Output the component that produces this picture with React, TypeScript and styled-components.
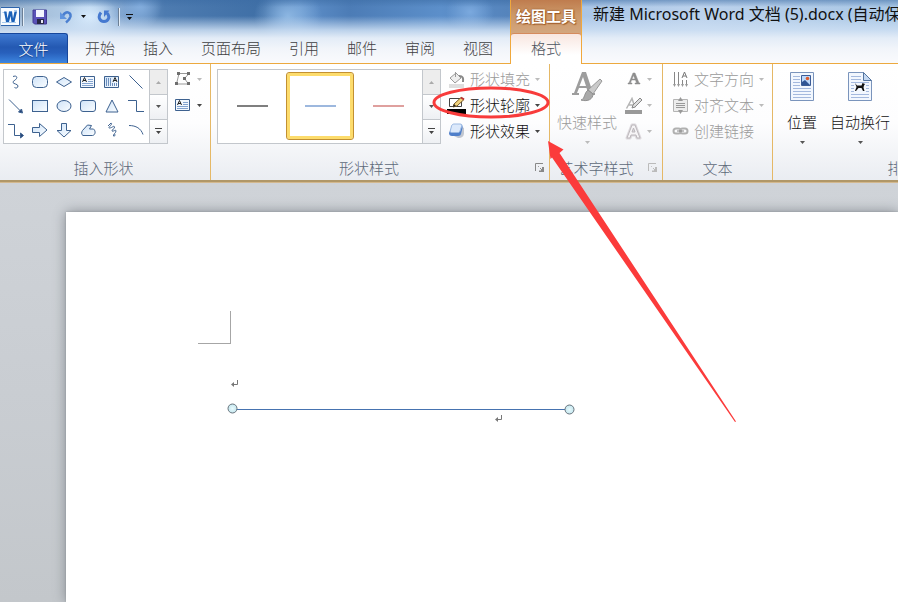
import React from "react";
import styled, { createGlobalStyle } from "styled-components";

const Global = createGlobalStyle`
  *, *::before, *::after { box-sizing: border-box; }
  html, body, #root { height: 100%; }
  body {
    margin: 0;
    overflow: hidden;
    font-family: "Noto Sans", "Noto Sans CJK SC", sans-serif;
    font-size: 15px;
    font-weight: 300;
    line-height: 20px;
    color: #333;
  }
  button {
    margin: 0;
    padding: 0;
    border: 0;
    background: none;
    font: inherit;
    color: inherit;
    white-space: nowrap;
  }
  svg { display: block; flex: none; }
`;

const ORANGE = "#eca93f";

const Window = styled.div`
  position: relative;
  display: flex;
  flex-direction: column;
  height: 100%;
  overflow: hidden;
`;

const Header = styled.header`
  display: flex;
  flex: none;
  height: 64px;
  background:
    linear-gradient(to bottom, rgba(205, 223, 243, 0) 16px, rgba(205, 223, 243, 0.85) 30px, #e3ecf7 38px, #f2f5fa 49px, #fafbfd 64px),
    linear-gradient(to bottom, rgba(60, 108, 164, 0.55), rgba(60, 108, 164, 0) 7px),
    radial-gradient(ellipse 30px 22px at 90px 18px, #d8ebfc 0%, rgba(201, 226, 248, 0) 100%),
    radial-gradient(ellipse 22px 26px at 140px 4px, #86b0e0 0%, rgba(134, 180, 230, 0) 100%),
    radial-gradient(ellipse 34px 30px at 288px 16px, #8cb6e2 0%, rgba(143, 189, 232, 0) 100%),
    radial-gradient(ellipse 24px 20px at 470px 12px, #7ba9de 0%, rgba(138, 184, 236, 0) 100%),
    linear-gradient(to right, #8fa9c6 0, #a9c3de 50px, #b4d0ec 90px, #7ba0cb 125px, #4d7bb0 165px, #3f6fa6 265px, #5f90ca 300px, #4c7cb6 350px, #5c8fca 440px, #5584bc 508px, #a9c5e6 582px, #bcd2ec 700px, #a9c7e5 100%);
`;

const HeaderMain = styled.div`
  display: flex;
  flex: none;
  flex-direction: column;
  justify-content: space-between;
  width: 510px;
  border-bottom: 1px solid ${ORANGE};
`;

const QuickAccess = styled.div`
  display: flex;
  align-items: center;
  height: 33px;
`;

const QuickButton = styled.button<{ $w: number }>`
  display: flex;
  align-items: center;
  justify-content: center;
  width: ${(p) => p.$w}px;
  height: 22px;
`;

const QuickDivider = styled.span`
  width: 2px;
  height: 18px;
  border-left: 1px solid #6c7f95;
  border-right: 1px solid #e4eef8;
`;

const Tabs = styled.nav`
  display: flex;
  align-items: flex-end;
`;

const FileTab = styled.button`
  width: 68px;
  height: 30px;
  margin-right: 3px;
  border: 1px solid #17479c;
  border-left: 0;
  border-bottom: 0;
  border-radius: 0 3px 0 0;
  background: linear-gradient(#3f7ad2, #2459b2 45%, #2860bc 65%, #3d86e0);
  color: #fff;
  text-shadow: 0 1px 1px #123c80;
`;

const Tab = styled.button`
  height: 30px;
  padding: 0 14px;
  color: #3f4042;
`;

const ContextTabs = styled.div`
  display: flex;
  flex: none;
  flex-direction: column;
  width: 72px;
  border: 1px solid #f0a83c;
  border-top: 0;
  border-bottom: 0;
  background: linear-gradient(#bf7c4e, #cb9767 14px, #d3a67e 33px);
`;

const ContextTitle = styled.div`
  height: 33px;
  padding-top: 6px;
  color: #fff;
  font-weight: 600;
  text-align: center;
  text-shadow: 0 0 2px #8b4513, 1px 1px 1px #a8632e;
  white-space: nowrap;
`;

const ContextTab = styled.button`
  flex: 1;
  padding-bottom: 2px;
  border-top: 1px solid #d58a5c;
  border-radius: 3px 3px 0 0;
  background: linear-gradient(#f8e6e0, #fff 70%);
  color: #4d5560;
`;

const DocTitle = styled.div`
  flex: 1;
  min-width: 0;
  padding: 4px 0 0 11px;
  overflow: hidden;
  border-bottom: 1px solid ${ORANGE};
  color: #111;
  font-size: 16px;
  white-space: nowrap;
  font-weight: 400;
`;

const Ribbon = styled.div`
  display: flex;
  flex: none;
  height: 119px;
  overflow: hidden;
  border-bottom: 1px solid #d3b88e;
  box-shadow: inset 0 -2px 0 #b09768;
  background: linear-gradient(#fff, #fdfdfe 50%, #e9ecf1);
`;

const Group = styled.section<{ $w: number }>`
  display: flex;
  flex: none;
  flex-direction: column;
  width: ${(p) => p.$w}px;
  margin-bottom: 2px;
  border-right: 1px solid #e5b866;
`;

const GroupBody = styled.div<{ $left: number }>`
  display: flex;
  flex: 1;
  align-items: flex-start;
  padding: 2px 0 0 ${(p) => p.$left}px;
`;

const GroupFooter = styled.footer<{ $right?: number }>`
  display: flex;
  position: relative;
  align-items: center;
  justify-content: center;
  height: 24px;
  padding-right: ${(p) => p.$right ?? 0}px;
  color: #5d6979;
`;

const Launcher = styled.button`
  position: absolute;
  right: 4px;
  top: 7px;
`;

const Gallery = styled.div`
  display: flex;
  height: 75px;
  margin-top: 3px;
  border: 1px solid #c3c7cc;
  background: #fff;
`;

const ShapeGrid = styled.div`
  display: grid;
  grid-template-columns: repeat(6, 24px);
  grid-auto-rows: 24px;
  width: 145px;
`;

const ShapeButton = styled.button`
  display: flex;
  align-items: center;
  justify-content: center;
`;

const Scroller = styled.div`
  display: grid;
  grid-template-rows: repeat(3, 1fr);
  width: 18px;
  border-left: 1px solid #c3c7cc;
`;

const ScrollButton = styled.button<{ $off?: boolean }>`
  display: flex;
  align-items: center;
  justify-content: center;
  background: ${(p) => (p.$off ? "#ededed" : "linear-gradient(#fff, #eef0f3)")};
  & + & { border-top: 1px solid #c3c7cc; }
`;

const StyleButton = styled.button<{ $on?: boolean }>`
  display: flex;
  align-items: center;
  justify-content: center;
  width: 68px;
  height: 68px;
  margin-top: 2px;
  border-radius: 3px;
  border: ${(p) => (p.$on ? "1px solid #c29032" : "0")};
  box-shadow: ${(p) => (p.$on ? "inset 0 0 0 3px #fddc6c" : "none")};
`;

const Swatch = styled.span<{ $c: string }>`
  width: 31px;
  height: 2px;
  background: ${(p) => p.$c};
`;

const Tools = styled.div<{ $left?: number }>`
  display: flex;
  flex-direction: column;
  margin-left: ${(p) => p.$left ?? 0}px;
`;

const Command = styled.button<{ $off?: boolean }>`
  display: flex;
  align-items: center;
  gap: 5px;
  height: 26px;
  color: ${(p) => (p.$off ? "#9a9a9a" : "#111")};
`;

const CommandIcon = styled.span`
  display: flex;
  align-items: center;
  justify-content: center;
  width: 18px;
`;

const BigCommand = styled.button<{ $off?: boolean }>`
  display: flex;
  flex-direction: column;
  align-items: center;
  padding-top: 3px;
  color: ${(p) => (p.$off ? "#9a9a9a" : "#111")};
`;

const BigIcon = styled.span`
  display: flex;
  align-items: center;
  height: 36px;
  margin-bottom: 7px;
`;

const BigArrow = styled.span`
  padding-top: 9px;
`;

const Workspace = styled.main`
  flex: 1;
  min-height: 0;
  padding: 29px 0 0 66px;
  background: linear-gradient(#cfd3d8, #c9cdd2 50%, #c3c7cb);
`;

const Page = styled.article`
  position: relative;
  height: 100%;
  padding: 99px 0 0 132px;
  background: #fff;
  box-shadow: 0 0 12px #858a90, 0 0 2px #9a9ea3;
`;

const MarginCorner = styled.div`
  width: 33px;
  height: 33px;
  border-right: 1px solid #a6a6a6;
  border-bottom: 1px solid #a6a6a6;
`;

const Body = styled.div`
  padding-top: 36px;
`;

const Paragraph = styled.p<{ $indent: number }>`
  height: 35px;
  margin: 0;
  padding-left: ${(p) => p.$indent}px;
`;

const LineShape = styled.svg`
  position: absolute;
  left: 160px;
  top: 190px;
`;

const Annotation = styled.svg`
  position: absolute;
  left: 430px;
  top: 80px;
  pointer-events: none;
`;

const Defs = styled.svg`
  position: absolute;
`;

const Caret = ({ c = "#555", up = false }: { c?: string; up?: boolean }) => (
  <svg width="5" height="3" viewBox="0 0 5 3"><path d={up ? "M0 3h5L2.500 0z" : "M0 0h5L2.500 3z"} fill={c} /></svg>
);

const More = ({ c = "#444" }: { c?: string }) => (
  <svg width="7" height="6" viewBox="0 0 7 6"><path d="M0 0h7v1H0zM1 3h5L3.500 6z" fill={c} /></svg>
);

const LaunchIcon = ({ c }: { c: string }) => (
  <svg width="10" height="10" viewBox="0 0 10 10"><path d="M.5 8V.5H8M3.500 4V3.500H4M5 5l2 2" fill="none" stroke={c} /><path d="M9 4v5H4V7.500h2V6h1V4z" fill={c} /></svg>
);

const shapeNames = ["曲线", "圆角", "菱形", "文本框", "竖排文本框", "直线", "箭头", "矩形", "椭圆", "圆角矩形", "三角形", "肘形", "肘形箭头", "右箭头", "下箭头", "任意多边形", "自由曲线", "弧形"];

const TextBoxIcon = () => (
  <>
    <path d="M1.500 3.500h14v11h-14z" fill="#f3f8fe" stroke="#3d618f" />
    <path d="M9 6.500h5M9 8.500h5M3 10.500h11M3 12.500h11" stroke="#83a3cf" fill="none" />
    <path d="M3.500 9L5.500 4.500 7.500 9M4 7.500h3" stroke="#222" fill="none" />
  </>
);

const shapeArt: React.ReactNode[] = [
  <path d="M6 3.500c3-1 4.500 0 3.500 2S5.500 8 6 9.500 11 11 11 13s-2 2.500-3.500 1.500" fill="none" />,
  <rect x="1.500" y="3.500" width="15" height="11" rx="4" />,
  <path d="M1.500 9L9 4.500 16.500 9 9 13.500z" />,
  <TextBoxIcon />,
  <><path d="M1.500 3.500h14v11h-14z" /><path d="M3.500 5v8M5.500 5v8M7.500 5v8M9.500 10v3M11.500 10v3M13.500 10v3" stroke="#6d8fbd" /><path d="M10 9l2-4.500L14 9M10.500 7.500h3" stroke="#222" fill="none" /></>,
  <path d="M2.500 2.500l13 13" />,
  <><path d="M2 2.500l12 12" /><path d="M15.500 16l-4-1 3-3z" fill="#264478" /></>,
  <rect x="1.500" y="3.500" width="15" height="11" />,
  <ellipse cx="9" cy="9" rx="7" ry="5.500" />,
  <rect x="1.500" y="3.500" width="15" height="11" rx="2.500" />,
  <path d="M9 3L15 15H3z" />,
  <path d="M1 3.500h8.500v11H17" fill="none" />,
  <><path d="M1 3.500h6.500v11H15" fill="none" /><path d="M16.500 14.500l-3-2.500v5z" fill="#264478" /></>,
  <path d="M1.500 6.500h7V2.500L16 9l-7.500 6.500v-4h-7z" />,
  <path d="M6.500 2.500h5v7H16L9 16 2 9.500h4.500z" />,
  <path d="M3.500 9.500L8.500 4l4 .5-2 3.500h4c2.500 2 2 6-1 6.500H4c-2-1-1.500-3.500-.5-5z" />,
  <path d="M5 5l3-3c2.500 1-4 5-1.500 5S11 4 11.500 6 8 9 9 10s4-2 4 0-3 3-2.500 5c1 1 2-1 1-2" fill="none" />,
  <path d="M2 4.500c7 0 12 3 14 9" fill="none" />,
];

const shapeIcon = (i: number) => (
  <svg width="18" height="18" viewBox="0 0 18 18" fill="url(#shapeFill)" stroke="#3d618f">{shapeArt[i]}</svg>
);

const QuickIcons = {
  word: (
    <svg width="20" height="20" viewBox="0 0 20 20"><path d="M0 .5h18.500v18H0" fill="#f7fbff" stroke="#2d64ac" /><path d="M1.500 5.500h4M8 4.500h3M13 3.500h3M1 15.500h14" stroke="#a9cbee" /><path d="M3 4.500h2.500l1 7 1.500-7h3l1 7 1.500-7H16L13.500 15h-3L9.500 9 8 15H5z" fill="#1a61b8" /></svg>
  ),
  save: (
    <svg width="16" height="16" viewBox="0 0 16 16"><path d="M1 1h13.500v14H2.500L1 13.500z" fill="#5a52b8" stroke="#433a94" /><path d="M4 1h8v7H4z" fill="#f3f5ff" /><path d="M5 10h7v5H5z" fill="#272744" /><path d="M9 11h2v3H9z" fill="#e9e9f6" /></svg>
  ),
  undo: (
    <svg width="14" height="14" viewBox="0 0 14 14"><path d="M4 5.500C7 .5 12 2 11.500 6.500c-.5 2.500-2 4-4.500 6" fill="none" stroke="#4a7fd0" strokeWidth="2.500" /><path d="M1 2v7h7z" fill="#5f94de" /></svg>
  ),
  redo: (
    <svg width="14" height="14" viewBox="0 0 14 14"><path d="M4 2.500c-3.500 4-1.500 9 3 9s6.500-5 3-8.500" fill="none" stroke="#4579d0" strokeWidth="3" /><path d="M7 .5V7L12.500.5z" fill="#4579d0" /></svg>
  ),
};

const EditPoints = () => (
  <svg width="18" height="16" viewBox="0 0 18 16"><path d="M5 2.500h10l-4.500 5 4 5.500H2.500L5 2.500z" fill="none" stroke="#999" /><path d="M3 1h3v3H3zM13 1h3v3h-3zM9 6h3v3H9zM1 11h3v3H1zM13 11h3v3h-3z" fill="#6e6e6e" /></svg>
);

const FillIcon = () => (
  <svg width="17" height="17" viewBox="0 0 17 17"><path d="M2 7l6-5 5 5-6 5z" fill="#eee" stroke="#999" /><path d="M7.500 1v5" stroke="#999" /><path d="M11 5c4 0 4.500 2 4 6" fill="none" stroke="#888" strokeWidth="2" /><path d="M1 13h15v4H1z" fill="#dedede" /></svg>
);

const OutlineIcon = () => (
  <svg width="19" height="18" viewBox="0 0 19 18"><path d="M2.500 2.500h12v8h-12z" fill="#fff" stroke="#444" /><path d="M6 11l1-3 7-6.500 3 2L10 10z" fill="#f1d27c" stroke="#7a5b26" /><path d="M6 11l1-3 2 2z" fill="#222" /><path d="M14 1.500l3 2" stroke="#b33" strokeWidth="2" /><path d="M0 13h19v5H0z" fill="#000" /></svg>
);

const EffectIcon = () => (
  <svg width="17" height="16" viewBox="0 0 17 16"><path d="M6 13l4 2c4 0 6-2 6-5V5l-2-1z" fill="#a9b0bd" opacity=".7" /><path d="M5 1h7c2 0 3 2 2.500 4L13 11c-.5 1-1 2-3 2H4c-2 0-3-1-3-3z" fill="#4f7fca" /><path d="M6 1h6c2 0 2 1 1.500 2.500L12 8c-.5 1-1 1.500-2 1.500H3.500C2 9.500 2 8 2.500 7l1-4C4 1.500 5 1 6 1z" fill="#dce9fb" stroke="#9bb9e2" /></svg>
);

const QuickStyleIcon = () => (
  <svg width="32" height="34" viewBox="0 0 32 34"><path d="M11 2h4l7 21h2v2h-9v-2h2l-1.500-5H8l-2 5h2v2H1v-2h2zM12 7L8.500 16H15z" fill="#9d9d9d" /><path d="M29 9l2 2-9 13-5-4z" fill="#cacaca" stroke="#999" /><path d="M17 20l5 4c0 5-5 8-12 6 4-1 3-7 7-10z" fill="#a9a9a9" stroke="#8f8f8f" /></svg>
);

const TextFillIcon = () => (
  <svg width="17" height="16" viewBox="0 0 17 16"><path d="M8 2h2l4 10h1v1h-5v-1h1.500L10.500 9H6.500L5.500 12H7v1H3v-1h1zM8.500 4.500L7 8h3z" fill="#8d8d8d" stroke="#8d8d8d" strokeWidth=".5" /></svg>
);

const TextOutlineIcon = () => (
  <svg width="17" height="17" viewBox="0 0 17 17"><path d="M1.500 11.500L7 1.500l3 9M4 8h4" fill="none" stroke="#b4b4b4" strokeWidth="1.500" /><path d="M7 11l1-3 7-7 2 2-7 7z" fill="#ddd" stroke="#888" /><path d="M0 13h17v4H0z" fill="#999" /></svg>
);

const TextEffectIcon = () => (
  <svg width="17" height="17" viewBox="0 0 17 17"><path d="M2 15L7 2h3l5 13h-3l-1-3H6l-1 3zM7 9h3L8.500 5z" fill="#f6f4f6" stroke="#dcd8dc" strokeWidth="3" strokeLinejoin="round" /><path d="M2 15L7 2h3l5 13h-3l-1-3H6l-1 3zM7 9h3L8.500 5z" fill="#f6f4f6" stroke="#bcb8bc" /></svg>
);

const DirectionIcon = () => (
  <svg width="17" height="17" viewBox="0 0 17 17"><path d="M2.500 1v14M6.500 1v14M10.500 9v6M14.500 9v6" stroke="#888" /><path d="M1 13h3l-1.500 3zM5 13h3l-1.500 3zM9 13h3l-1.500 3zM13 13h3l-1.500 3z" fill="#999" /><path d="M10 7l2.500-6L15 7M11 5h3" fill="none" stroke="#777" /></svg>
);

const AlignIcon = () => (
  <svg width="17" height="17" viewBox="0 0 17 17"><path d="M1.500 2.500h14v12h-14z" fill="#ededed" stroke="#b4b4b4" /><path d="M4 6.500h9M4 8.500h9M4 10.500h9" stroke="#999" /><path d="M6 4l2.500-4L11 4zM6 13l2.500 4 2.500-4z" fill="#999" /></svg>
);

const LinkIcon = () => (
  <svg width="17" height="12" viewBox="0 0 17 12"><path d="M4 3.500h2.500a2.500 2.500 0 010 5H4a2.500 2.500 0 010-5zM10.500 3.500H13a2.500 2.500 0 010 5h-2.500a2.500 2.500 0 010-5z" fill="none" stroke="#b0b0b0" strokeWidth="2" /><path d="M5 6h7" stroke="#888" /></svg>
);

const PositionIcon = () => (
  <svg width="26" height="30" viewBox="0 0 26 30"><path d="M1.500.5h23v28h-23z" fill="#f2f7fe" stroke="#7a94bc" /><path d="M4 4.500h7M4 7.500h7M4 10.500h7M4 13.500h7M4 16.500h18M4 19.500h18M4 22.500h18M4 25.500h18" stroke="#a4b9de" /><path d="M12.500 3.500h9v10h-9z" fill="#bcd8fa" stroke="#3c5c96" /><path d="M13 13v-3l3-2 5 5z" fill="#2f5595" /><circle cx="18.500" cy="6.500" r="1.800" fill="#dc5b2e" /></svg>
);

const WrapIcon = () => (
  <svg width="26" height="30" viewBox="0 0 26 30"><path d="M1.500.5h15l8 8v20h-23z" fill="#f2f7fe" stroke="#7a94bc" /><path d="M16.500.5v8h8z" fill="#c4d8f2" stroke="#54749f" /><path d="M4 4.500h10M4 7.500h10M4 10.500h18M4 13.500h3M4 16.500h3M4 19.500h3M19 13.500h3M19 16.500h3M19 19.500h3M4 22.500h18M4 25.500h18" stroke="#a4b9de" /><path d="M8 11l2 2.500h4.500L15.500 11l2.500 1-1 1.500-.5 2 1 3.500h-1.500l-1.500-3h-3L9 19H8l1.500-4z" fill="#111" /></svg>
);

const ReturnMark = () => (
  <svg width="8" height="8" viewBox="0 0 8 8"><path d="M6.500 0v4.500H2" fill="none" stroke="#777" /><path d="M0 4.500L3 2v5z" fill="#777" /></svg>
);

const GalleryScroller = () => (
  <Scroller>
    <ScrollButton $off aria-label="向上"><Caret up c="#aaa" /></ScrollButton>
    <ScrollButton aria-label="向下"><Caret /></ScrollButton>
    <ScrollButton aria-label="其他"><More /></ScrollButton>
  </Scroller>
);

const tabs = ["开始", "插入", "页面布局", "引用", "邮件", "审阅", "视图"];

const Arrow = ({ off }: { off?: boolean }) => <Caret c={off ? "#bbb" : "#444"} />;

type ToolProps = { icon: React.ReactNode; text?: string; label?: string; off?: boolean; plain?: boolean };

const Tool = ({ icon, text, label, off, plain }: ToolProps) => (
  <Command $off={off} aria-label={label}>
    <CommandIcon>{icon}</CommandIcon>
    {text}
    {!plain && <Arrow off={off} />}
  </Command>
);

export default function App() {
  return (
    <Window>
      <Global />
      <Defs width="0" height="0">
        <defs>
          <linearGradient id="shapeFill" x1="0" y1="0" x2="1" y2="1"><stop stopColor="#cfe3f8" /><stop offset="1" stopColor="#fafdff" /></linearGradient>
          <radialGradient id="handleFill"><stop stopColor="#e8fafd" /><stop offset="1" stopColor="#c4e6ee" /></radialGradient>
        </defs>
      </Defs>
      <Header>
        <HeaderMain>
          <QuickAccess>
            <QuickButton $w={22} aria-label="Word">{QuickIcons.word}</QuickButton>
            <QuickDivider />
            <QuickButton $w={31} aria-label="保存">{QuickIcons.save}</QuickButton>
            <QuickButton $w={22} aria-label="撤消">{QuickIcons.undo}</QuickButton>
            <QuickButton $w={13} aria-label="撤消列表"><Caret c="#111" /></QuickButton>
            <QuickButton $w={28} aria-label="恢复">{QuickIcons.redo}</QuickButton>
            <QuickDivider />
            <QuickButton $w={19} aria-label="自定义快速访问工具栏"><More c="#111" /></QuickButton>
          </QuickAccess>
          <Tabs>
            <FileTab>文件</FileTab>
            {tabs.map((t) => <Tab key={t}>{t}</Tab>)}
          </Tabs>
        </HeaderMain>
        <ContextTabs>
          <ContextTitle>绘图工具</ContextTitle>
          <ContextTab>格式</ContextTab>
        </ContextTabs>
        <DocTitle>新建 Microsoft Word 文档 (5).docx (自动保存</DocTitle>
      </Header>

      <Ribbon>
        <Group $w={211}>
          <GroupBody $left={3}>
            <Gallery>
              <ShapeGrid>
                {shapeNames.map((n, i) => <ShapeButton key={n} aria-label={n}>{shapeIcon(i)}</ShapeButton>)}
              </ShapeGrid>
              <GalleryScroller />
            </Gallery>
            <Tools $left={6}>
              <Tool off label="编辑形状" icon={<EditPoints />} />
              <Tool label="文本框" icon={<svg width="18" height="18" viewBox="0 0 18 18"><TextBoxIcon /></svg>} />
            </Tools>
          </GroupBody>
          <GroupFooter $right={3}>插入形状</GroupFooter>
        </Group>

        <Group $w={339}>
          <GroupBody $left={6}>
            <Gallery>
              <StyleButton aria-label="黑色细线"><Swatch $c="#7f7f7f" /></StyleButton>
              <StyleButton $on aria-label="蓝色细线"><Swatch $c="#9db8de" /></StyleButton>
              <StyleButton aria-label="红色细线"><Swatch $c="#dfa09e" /></StyleButton>
              <GalleryScroller />
            </Gallery>
            <Tools $left={6}>
              <Tool off icon={<FillIcon />} text="形状填充" />
              <Tool icon={<OutlineIcon />} text="形状轮廓" />
              <Tool icon={<EffectIcon />} text="形状效果" />
            </Tools>
          </GroupBody>
          <GroupFooter $right={22}>形状样式<Launcher aria-label="形状样式设置"><LaunchIcon c="#888" /></Launcher></GroupFooter>
        </Group>

        <Group $w={113}>
          <GroupBody $left={7}>
            <BigCommand $off>
              <BigIcon><QuickStyleIcon /></BigIcon>
              快速样式
              <BigArrow><Caret c="#bbb" /></BigArrow>
            </BigCommand>
            <Tools $left={7}>
              <Tool off label="文本填充" icon={<TextFillIcon />} />
              <Tool off label="文本轮廓" icon={<TextOutlineIcon />} />
              <Tool off label="文本效果" icon={<TextEffectIcon />} />
            </Tools>
          </GroupBody>
          <GroupFooter $right={20}>艺术字样式<Launcher aria-label="艺术字样式设置"><LaunchIcon c="#bbb" /></Launcher></GroupFooter>
        </Group>

        <Group $w={110}>
          <GroupBody $left={8}>
            <Tools>
              <Tool off icon={<DirectionIcon />} text="文字方向" />
              <Tool off icon={<AlignIcon />} text="对齐文本" />
              <Tool off plain icon={<LinkIcon />} text="创建链接" />
            </Tools>
          </GroupBody>
          <GroupFooter>文本</GroupFooter>
        </Group>

        <Group $w={260}>
          <GroupBody $left={14}>
            <BigCommand>
              <BigIcon><PositionIcon /></BigIcon>
              位置
              <BigArrow><Caret /></BigArrow>
            </BigCommand>
            <Tools $left={13}>
              <BigCommand>
                <BigIcon><WrapIcon /></BigIcon>
                自动换行
                <BigArrow><Caret /></BigArrow>
              </BigCommand>
            </Tools>
          </GroupBody>
          <GroupFooter>排列</GroupFooter>
        </Group>
      </Ribbon>

      <Workspace>
        <Page>
          <MarginCorner />
          <Body>
            <Paragraph $indent={33}><ReturnMark /></Paragraph>
            <Paragraph $indent={297}><ReturnMark /></Paragraph>
          </Body>
          <LineShape width="350" height="14" viewBox="0 0 350 14">
            <path d="M6 7.500h338" stroke="#4673b0" />
            <circle cx="6.500" cy="6.500" r="4.500" fill="url(#handleFill)" stroke="#68737c" />
            <circle cx="343.500" cy="7.500" r="4.500" fill="url(#handleFill)" stroke="#68737c" />
          </LineShape>
        </Page>
      </Workspace>

      <Annotation width="320" height="350" viewBox="0 0 320 350">
        <ellipse cx="61" cy="22.500" rx="57" ry="14.500" fill="none" stroke="#f83b3b" strokeWidth="3" />
        <path d="M118 61L133.500 69.500 129.500 73 306 341.500 305 342 122 77.500 120.500 79z" fill="#fb3b3b" />
      </Annotation>
    </Window>
  );
}
